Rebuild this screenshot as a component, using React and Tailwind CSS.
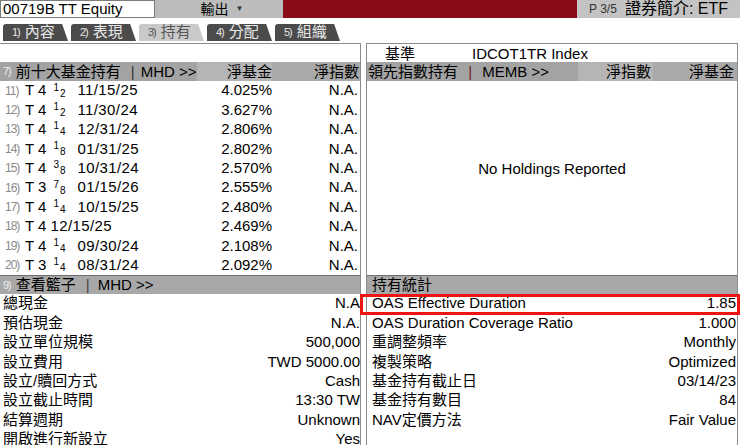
import React from 'react'

const tabs = [
  { n: '1)', label: '內容' },
  { n: '2)', label: '表現' },
  { n: '3)', label: '持有', active: true },
  { n: '4)', label: '分配' },
  { n: '5)', label: '組織' },
]

const holdings = [
  { n: '11)', c: '4', f: ['1', '2'], date: '11/15/25', pct: '4.025%' },
  { n: '12)', c: '4', f: ['1', '2'], date: '11/30/24', pct: '3.627%' },
  { n: '13)', c: '4', f: ['1', '4'], date: '12/31/24', pct: '2.806%' },
  { n: '14)', c: '4', f: ['1', '8'], date: '01/31/25', pct: '2.802%' },
  { n: '15)', c: '4', f: ['3', '8'], date: '10/31/24', pct: '2.570%' },
  { n: '16)', c: '3', f: ['7', '8'], date: '01/15/26', pct: '2.555%' },
  { n: '17)', c: '4', f: ['1', '4'], date: '10/15/25', pct: '2.480%' },
  { n: '18)', c: '4', f: null, date: '12/15/25', pct: '2.469%' },
  { n: '19)', c: '4', f: ['1', '4'], date: '09/30/24', pct: '2.108%' },
  { n: '20)', c: '3', f: ['1', '4'], date: '08/31/24', pct: '2.092%' },
]

const basket = [
  ['總現金', 'N.A'],
  ['預估現金', 'N.A.'],
  ['設立單位規模', '500,000'],
  ['設立費用', 'TWD 5000.00'],
  ['設立/贖回方式', 'Cash'],
  ['設立截止時間', '13:30 TW'],
  ['結算週期', 'Unknown'],
  ['開啟進行新設立', 'Yes'],
]

const stats = [
  ['OAS Effective Duration', '1.85'],
  ['OAS Duration Coverage Ratio', '1.000'],
  ['重調整頻率', 'Monthly'],
  ['複製策略', 'Optimized'],
  ['基金持有截止日', '03/14/23'],
  ['基金持有數目', '84'],
  ['NAV定價方法', 'Fair Value'],
]

function Frac({ f }) {
  // stacked fraction like the terminal draws it: small top digit, small lower digit
  return (
    <span className="inline-flex items-center text-[10px] leading-none ml-[7px] w-[13px]">
      <span className="-translate-y-[3px]">{f[0]}</span>
      <span className="translate-y-[3px] ml-[1px]">{f[1]}</span>
    </span>
  )
}

export default function App() {
  return (
    <div className="relative w-[740px] h-[445px] overflow-hidden bg-white text-[15px] text-black font-['Liberation_Sans','Noto_Sans_CJK_TC',sans-serif]">
      {/* top bar */}
      <div className="flex h-[18px]">
        <div className="w-[155px] border border-[#7c7c7c] bg-white pl-[2px] leading-[16px] text-[15px]">00719B TT Equity</div>
        <div className="w-[128px] bg-[#bcbcbc] flex items-center justify-center gap-[7px] pl-[6px] text-[14px]">
          輸出 <span className="text-[8px] text-[#333]">▼</span>
        </div>
        <div className="flex-1 bg-[#8a0b19]" />
        <div className="w-[163px] bg-[#c3c3c3] flex items-center justify-end pr-[12px]">
          <span className="text-[12px] text-[#333] mr-[8px]">P 3/5</span>
          <span className="text-[16px] leading-none">證券簡介: ETF</span>
        </div>
      </div>

      {/* tabs */}
      <div className="flex gap-[3px] pl-[3px] pt-[6px] h-[23px]">
        {tabs.map(t => (
          <div
            key={t.n}
            className={
              t.active
                ? 'h-[17px] w-[65px] bg-[#c9c9c9] text-[#555] rounded-tl-[3px] [clip-path:polygon(0_0,91%_0,100%_100%,0_100%)] flex items-center pl-[9px] text-[15px]'
                : 'h-[17px] w-[65px] bg-[#4b4b4b] text-[#e8e8e8] rounded-tl-[3px] [clip-path:polygon(0_0,91%_0,100%_100%,0_100%)] flex items-center pl-[9px] text-[15px]'
            }
          >
            <span className="text-[11px] mr-[5px] tracking-[-1px]">{t.n}</span>
            {t.label}
          </div>
        ))}
      </div>

      {/* panels */}
      <div className="mt-[2px] flex h-[402px]">
        {/* left panel */}
        <div className="w-[361px] flex flex-col border-t border-r border-[#8c8c8c]">
          <div className="h-[18px] shrink-0" />
          <div className="h-[19px] shrink-0 flex leading-[19px]">
            <div className="w-[197px] bg-[#a3a3a3] flex items-center pl-[3px] whitespace-nowrap">
              <span className="text-[11px] text-[#eee] mr-[5px] tracking-[-1px]">7)</span>
              前十大基金持有 <span className="ml-[10px] mr-[6px] text-[#333]">|</span>MHD &gt;&gt;
            </div>
            <div className="w-[75px] bg-[#b5b5b5] text-right">淨基金</div>
            <div className="flex-1 bg-[#a9a9a9] text-right pr-[1px]">淨指數</div>
          </div>
          {holdings.map(h => (
            <div key={h.n} className="h-[19.4px] shrink-0 flex items-center">
              <div className="w-[197px] flex items-center pl-[5px] whitespace-nowrap">
                <span className="w-[20px] text-[12px] text-[#8a8a8a] tracking-[-1px]">{h.n}</span>
                <span>T {h.c}</span>
                {h.f && <Frac f={h.f} />}
                <span className={h.f ? 'ml-[11px] tracking-[0.4px]' : 'ml-[4px] tracking-[0.4px]'}>{h.date}</span>
              </div>
              <div className="w-[75px] text-right">{h.pct}</div>
              <div className="flex-1 text-right pr-[2px]">N.A.</div>
            </div>
          ))}
          <div className="h-[19px] shrink-0 border-t border-[#6f6f6f] bg-[#a8a8a8] flex items-center pl-[3px]">
            <span className="text-[11px] text-[#eee] mr-[5px] tracking-[-1px]">9)</span>
            查看籃子 <span className="ml-[10px] mr-[8px] text-[#444]">|</span>MHD &gt;&gt;
          </div>
          <div className="overflow-hidden">
            {basket.map(([k, v]) => (
              <div key={k} className="h-[19.4px] flex items-center justify-between pl-[3px] whitespace-nowrap">
                <span>{k}</span>
                <span>{v}</span>
              </div>
            ))}
          </div>
        </div>

        {/* divider gap */}
        <div className="w-[5px] bg-white" />

        {/* right panel */}
        <div className="w-[372px] flex flex-col border-t border-l border-r border-[#8c8c8c]">
          <div className="h-[18px] shrink-0 flex items-center pl-[18px] leading-none">
            <span>基準</span>
            <span className="ml-[57px]">IDCOT1TR Index</span>
          </div>
          <div className="h-[19px] shrink-0 flex leading-[19px]">
            <div className="w-[211px] bg-[#a3a3a3] pl-[1px] whitespace-nowrap">
              領先指數持有 <span className="mx-[6px] text-[#6b1a24]">|</span> MEMB &gt;&gt;
            </div>
            <div className="w-[75px] bg-[#b5b5b5] text-right pr-[2px]">淨指數</div>
            <div className="flex-1 bg-[#a9a9a9] text-right pr-[3px]">淨基金</div>
          </div>
          <div className="h-[194px] shrink-0 flex justify-center pt-[78px]">
            <span className="h-[19px] leading-[19px]">No Holdings Reported</span>
          </div>
          <div className="h-[19px] shrink-0 border-t border-[#6f6f6f] bg-[#a8a8a8] flex items-center pl-[5px]">
            持有統計
          </div>
          <div className="overflow-hidden">
            {stats.map(([k, v]) => (
              <div key={k} className="h-[19.4px] flex items-center justify-between pl-[5px] pr-[1px] whitespace-nowrap">
                <span>{k}</span>
                <span>{v}</span>
              </div>
            ))}
          </div>
        </div>
      </div>

      {/* red highlight annotation */}
      <div className="absolute left-[360px] top-[294px] w-[380px] h-[21px] border-[3px] border-[#ee1414]" />
    </div>
  )
}
